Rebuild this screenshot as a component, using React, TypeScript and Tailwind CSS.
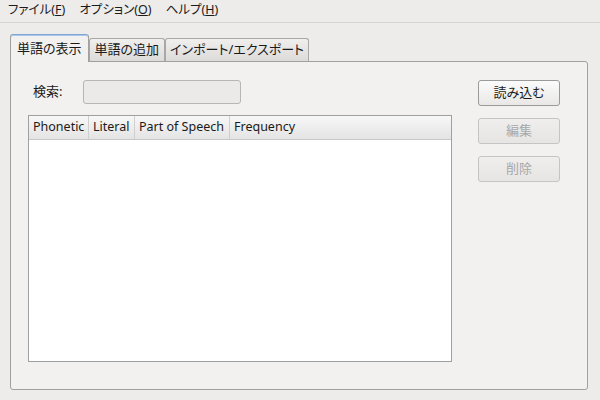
const font = "font-['Noto_Sans','Noto_Sans_CJK_JP',sans-serif] [font-feature-settings:'palt']";

function MenuItem({ label, accel }: { label: string; accel: string }) {
  return (
    <span className="px-[4px]">
      {label}(<span className="underline">{accel}</span>)
    </span>
  );
}

function Tab({ label, active, pad = 'px-[5px]' }: { label: string; active?: boolean; pad?: string }) {
  if (active) {
    return (
      <div className="relative z-10 -mb-px flex h-[28px] items-center rounded-t-[3px] border border-b-0 border-[#a0a0a0] border-t-[#7fa6d0] bg-[#f2f1f0] px-[6px] text-[13px] text-[#1a1a1a] shadow-[inset_0_1px_0_#aac8ea]">
        {label}
      </div>
    );
  }
  return (
    <div className={`mt-[4px] flex h-[23px] items-center rounded-t-[3px] border border-b-0 border-[#a8a8a8] bg-gradient-to-b from-[#f0efee] to-[#dcdbda] ${pad} text-[13px] text-[#1a1a1a]`}>
      {label}
    </div>
  );
}

function SideButton({ label, disabled }: { label: string; disabled?: boolean }) {
  return (
    <button
      className={`flex h-[26px] w-[82px] items-center justify-center rounded-[3px] border bg-gradient-to-b text-[13px] ${
        disabled
          ? 'border-[#c4c4c4] from-[#efeeed] to-[#e6e5e4] text-[#a8a8a8]'
          : 'border-[#9a9a9a] from-[#fbfbfb] to-[#e9e8e7] text-[#1a1a1a]'
      }`}
    >
      {label}
    </button>
  );
}

function HeaderCell({ label, width, last }: { label: string; width: string; last?: boolean }) {
  return (
    <div className={`flex h-full items-center overflow-hidden whitespace-nowrap px-[4px] ${width} ${last ? '' : 'border-r border-[#cfcfcf]'}`}>
      {label}
    </div>
  );
}

export default function App() {
  return (
    <div className={`flex h-[400px] w-[600px] flex-col bg-[#edeceb] ${font} text-[13px] text-[#1a1a1a]`}>
      {/* Menu bar */}
      <div className="flex h-[23px] items-center border-b border-[#d6d5d4] px-[4px] pb-[2px] text-[12.5px]">
        <MenuItem label="ファイル" accel="F" />
        <span className="w-[6px]" />
        <MenuItem label="オプション" accel="O" />
        <span className="w-[6px]" />
        <MenuItem label="ヘルプ" accel="H" />
      </div>

      {/* Tabs */}
      <div className="flex flex-1 flex-col pt-[11px] pr-[12px] pb-[10px] pl-[10px]">
        <div className="flex items-end">
          <Tab label="単語の表示" active />
          <Tab label="単語の追加" />
          <Tab label="インポート/エクスポート" pad="px-[4px]" />
        </div>
        <div className="flex flex-1 rounded-b-[3px] rounded-tr-[3px] border border-[#a0a0a0] bg-[#f2f1f0] pt-[18px] pr-[27px] pb-[27px] pl-[17px]">
          <div className="flex flex-1 flex-col">
            <div className="flex h-[24px] items-center">
              <span className="w-[55px] pl-[5px]">検索:</span>
              <div className="h-[24px] w-[158px] rounded-[3px] border border-[#b6b6b6] bg-[#ebeae9]" />
            </div>
            <div className="mt-[11px] flex flex-1 flex-col border border-[#a0a0a0] bg-white">
              <div className="flex h-[24px] border-b border-[#c8c8c8] bg-gradient-to-b from-[#f7f7f7] to-[#e4e4e4] text-[12.5px]">
                <HeaderCell label="Phonetic" width="w-[60px]" />
                <HeaderCell label="Literal" width="w-[46px]" />
                <HeaderCell label="Part of Speech" width="w-[95px]" />
                <HeaderCell label="Frequency" width="flex-1" last />
              </div>
              <div className="flex-1" />
            </div>
          </div>
          <div className="ml-[26px] flex flex-col gap-[12px]">
            <SideButton label="読み込む" />
            <SideButton label="編集" disabled />
            <SideButton label="削除" disabled />
          </div>
        </div>
      </div>
    </div>
  );
}
